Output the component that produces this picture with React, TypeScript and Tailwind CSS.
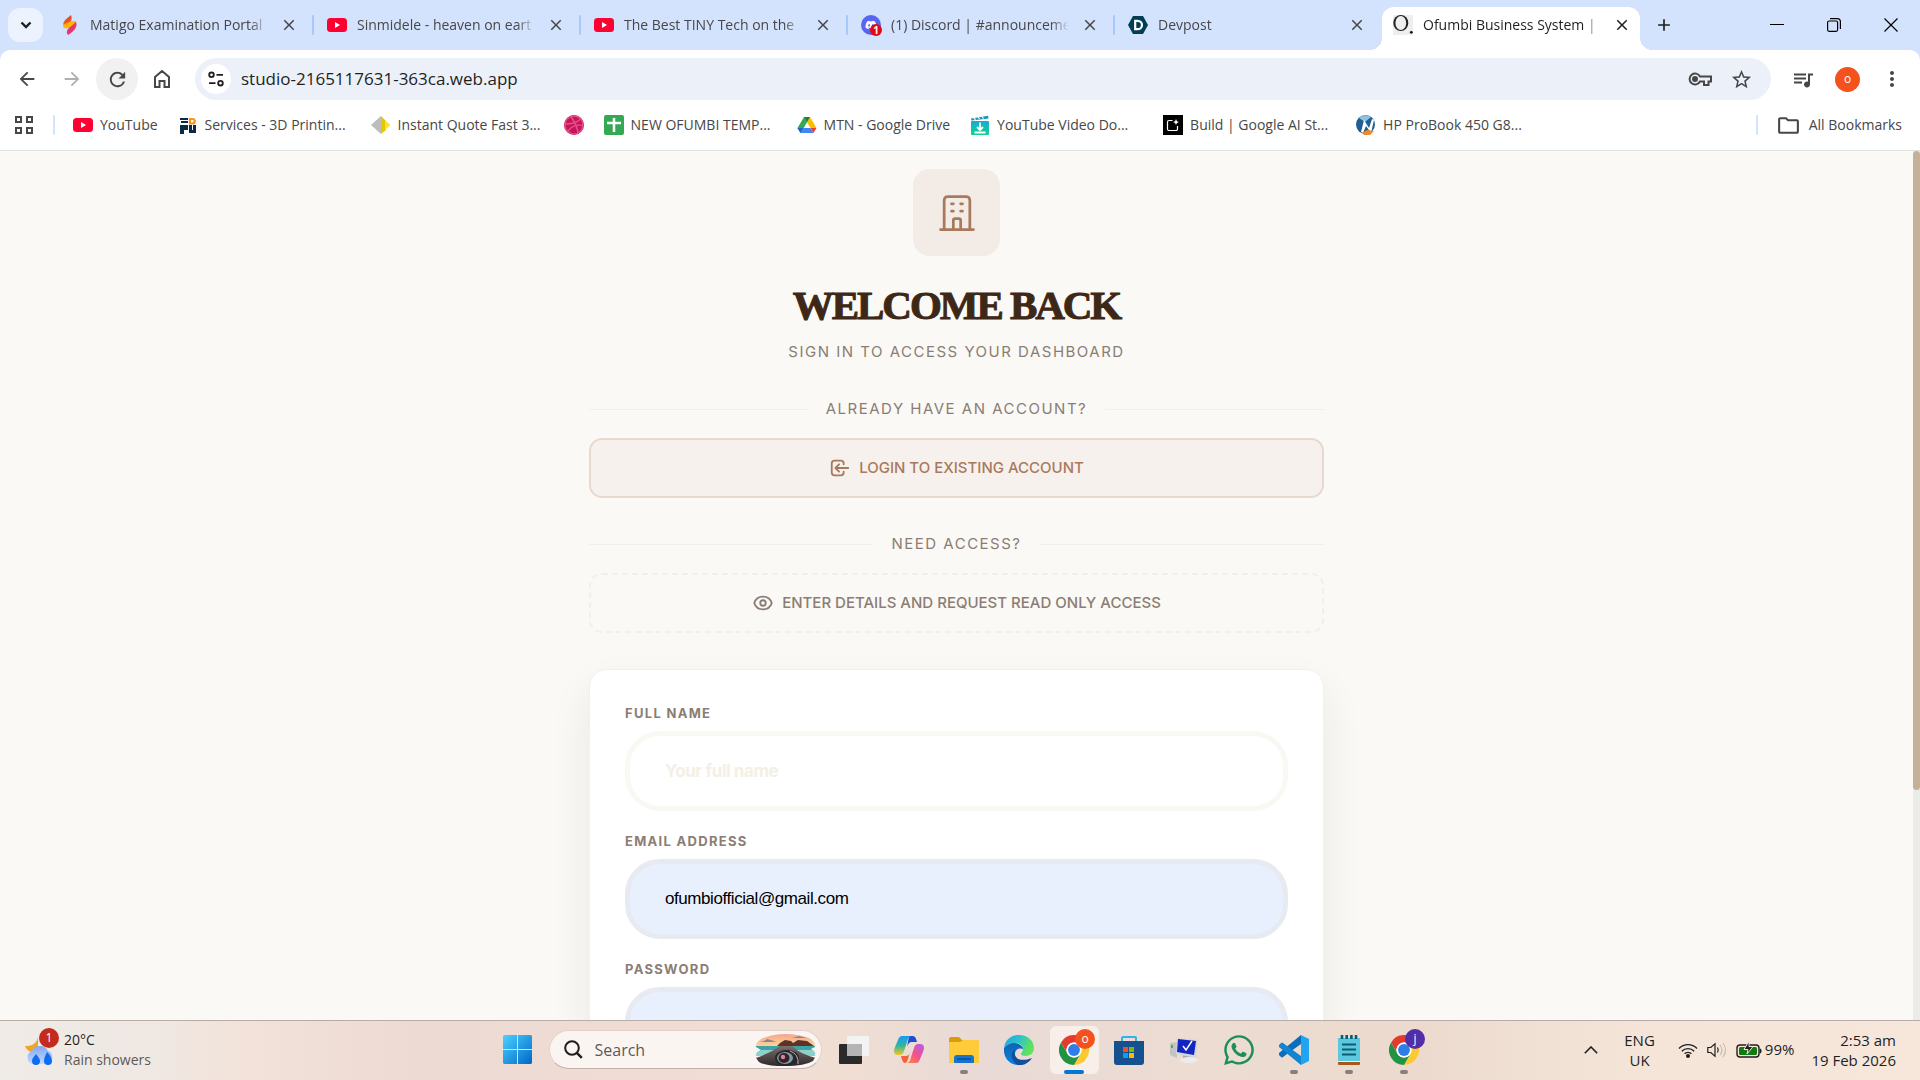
import type { ReactNode } from "react";
import {
  HiOutlineOfficeBuilding,
  HiOutlineLogin,
  HiOutlineEye,
} from "react-icons/hi";
import {
  MdArrowBack,
  MdArrowForward,
  MdRefresh,
  MdStarBorder,
  MdQueueMusic,
  MdMoreVert,
  MdOutlineFolder,
  MdClose,
  MdAdd,
} from "react-icons/md";
import { FaDribbble, FaWhatsapp, FaDiscord } from "react-icons/fa";

/* ---------- favicons ---------- */

function YouTubeIcon() {
  return (
    <svg viewBox="0 0 20 20" className="h-5 w-5 shrink-0">
      <rect x="0" y="3" width="20" height="14" rx="3.5" fill="#ff0033" />
      <path d="M8 7v6l5-3z" fill="#fff" />
    </svg>
  );
}

function MatigoIcon() {
  return (
    <svg viewBox="0 0 20 20" className="h-5 w-5 shrink-0">
      <defs>
        <linearGradient id="matigo" x1="0" y1="0" x2="0" y2="1">
          <stop offset="0" stopColor="#e8452a" />
          <stop offset="1" stopColor="#ff5a1f" />
        </linearGradient>
      </defs>
      <path d="M11 0c1 3 1 5-1 7l-6 4C2 7 5 5 11 0z" fill="url(#matigo)" />
      <path d="M3 12c0-3 4-4 7-5 2-1 3-1 6-1 1 4-3 6-6 7-3 0-5 1-7-1z" fill="#ffb400" />
      <path d="M16 7c2 5-2 9-8 13-2-3-1-5 1-7z" fill="#e8356d" />
    </svg>
  );
}

function DiscordIcon() {
  return (
    <span className="relative flex h-5 w-5 shrink-0 items-center justify-center rounded-full bg-[#5865f2]">
      <FaDiscord className="h-3 w-3 text-white" />
      <span className="absolute -right-px -bottom-px flex h-3 w-3 items-center justify-center rounded-full bg-[#e00b12] text-[10px] leading-none font-bold text-white">
        1
      </span>
    </span>
  );
}

function DevpostIcon() {
  return (
    <svg viewBox="0 0 20 20" className="h-5 w-5 shrink-0">
      <path d="M5 1h10l5 9-5 9H5l-5-9z" fill="#003e54" />
      <path
        d="M7.2 5.8h2.6a4.2 4.2 0 0 1 0 8.4H7.2z"
        fill="none"
        stroke="#fff"
        strokeWidth="2.2"
      />
    </svg>
  );
}

function OfumbiIcon() {
  return (
    <svg viewBox="0 0 20 20" className="h-5 w-5 shrink-0">
      <rect width="20" height="20" fill="#eeeeee" />
      <ellipse cx="7.800" cy="8" rx="7.500" ry="8" fill="#222" />
      <ellipse cx="7.800" cy="8" rx="5.400" ry="7" fill="#eeeeee" />
      <circle cx="18.300" cy="17.300" r="1.400" fill="#111" />
    </svg>
  );
}

function PrintIcon() {
  return (
    <svg viewBox="0 0 20 20" className="h-5 w-5 shrink-0">
      <path d="M2 3h8v2H2zM3 6h7v2H3z" fill="#0b2a45" />
      <path d="M12 4h2.500a2 2 0 0 1 0 4.500H12z" fill="none" stroke="#f7941d" strokeWidth="2.200" />
      <path d="M2 10h8v5H6v4H2zM11 10h3v5h1v-5h3v8h-7z" fill="#0b2a45" />
    </svg>
  );
}

function DiamondIcon() {
  return (
    <svg viewBox="0 0 20 20" className="h-5 w-5 shrink-0">
      <path d="M10 1v18L0 10z" fill="#bdbdbd" />
      <path d="M10 1l5 5v9l-5 4z" fill="#e6c800" />
      <path d="M14 5l5.500 5-5.500 5z" fill="#ffe03b" />
    </svg>
  );
}

function SheetPlusIcon() {
  return (
    <svg viewBox="0 0 20 20" className="h-5 w-5 shrink-0">
      <rect width="20" height="20" rx="2" fill="#34a853" />
      <path d="M10 3v14M3 8h14" stroke="#fff" strokeWidth="2.500" />
    </svg>
  );
}

function DriveIcon() {
  return (
    <svg viewBox="0 0 20 18" className="h-5 w-5 shrink-0">
      <path d="M7 1h6l-6.500 11.300L3.500 17 .5 12z" fill="#34a853" />
      <path d="M7 1h6l6.500 11h-6z" fill="#fbbc04" />
      <path d="M7 1h6l-3 5z" fill="#188038" />
      <path d="M6.500 12h7l3 5h-13z" fill="#4285f4" />
      <path d="M13.500 12h6l-3 5z" fill="#ea4335" />
      <path d="M.5 12h6l-3 5z" fill="#1967d2" />
    </svg>
  );
}

function VideoDownloadIcon() {
  return (
    <svg viewBox="0 0 20 20" className="h-5 w-5 shrink-0">
      <defs>
        <linearGradient id="vdl" x1="0" y1="0" x2="0" y2="1">
          <stop offset="0" stopColor="#18a9d6" />
          <stop offset="1" stopColor="#12d38b" />
        </linearGradient>
      </defs>
      <rect x="1" y="6" width="18" height="14" rx="1" fill="url(#vdl)" />
      <path d="M1 3.500L18 .8l.6 2.800L1.400 5.500z" fill="#1797b8" />
      <path d="M4 2.800l1.500 2M8 2l1.500 2M12 1.500l1.500 2" stroke="#fff" strokeWidth="1.200" />
      <path d="M10 7.500v7M7 12l3 3 3-3M4.500 17.500h11" fill="none" stroke="#fff" strokeWidth="1.800" />
    </svg>
  );
}

function BuildIcon() {
  return (
    <svg viewBox="0 0 20 20" className="h-5 w-5 shrink-0">
      <rect width="20" height="20" fill="#000" />
      <path
        d="M9.500 5.500H6A1.500 1.500 0 0 0 4.500 7v7A1.500 1.500 0 0 0 6 15.500h7a1.500 1.500 0 0 0 1.500-1.500v-3"
        fill="none"
        stroke="#fff"
        strokeWidth="1.200"
      />
      <path d="M13 4l.9 2.200L16 7l-2.100.9L13 10l-.9-2.100L10 7l2.100-.8z" fill="#fff" />
    </svg>
  );
}

function ProBookIcon() {
  return (
    <svg viewBox="0 0 20 20" className="h-5 w-5 shrink-0">
      <circle cx="9.500" cy="9.500" r="9.500" fill="#1f5e93" />
      <path d="M3 3a9 9 0 0 1 12-1L9 7z" fill="#8fc1e3" />
      <path d="M5 17L8 5l5 8 3-9 2 1-3 13-5-7-3 7z" fill="#fff" />
      <path d="M6 18l5-3 7 1-4 4H8z" fill="#f08a24" />
    </svg>
  );
}

/* ---------- browser chrome ---------- */

const tabs: { title: string; icon: ReactNode; active?: boolean }[] = [
  { title: "Matigo Examination Portal", icon: <MatigoIcon /> },
  { title: "Sinmidele - heaven on eart", icon: <YouTubeIcon /> },
  { title: "The Best TINY Tech on the", icon: <YouTubeIcon /> },
  { title: "(1) Discord | #announceme", icon: <DiscordIcon /> },
  { title: "Devpost", icon: <DevpostIcon /> },
  { title: "Ofumbi Business System |", icon: <OfumbiIcon />, active: true },
];

const bookmarks: { label: string; icon: ReactNode }[] = [
  { label: "YouTube", icon: <YouTubeIcon /> },
  { label: "Services - 3D Printin...", icon: <PrintIcon /> },
  { label: "Instant Quote Fast 3...", icon: <DiamondIcon /> },
  { label: "", icon: <FaDribbble className="h-5 w-5 rounded-full bg-[#c2185b] text-[#ea4c89]" /> },
  { label: "NEW OFUMBI TEMP...", icon: <SheetPlusIcon /> },
  { label: "MTN - Google Drive", icon: <DriveIcon /> },
  { label: "YouTube Video Do...", icon: <VideoDownloadIcon /> },
  { label: "Build | Google AI St...", icon: <BuildIcon /> },
  { label: "HP ProBook 450 G8...", icon: <ProBookIcon /> },
];

function TabStrip() {
  return (
    <div className="flex h-[50px] shrink-0 bg-[#d3e3fd] pl-2">
      <button
        aria-label="Search tabs"
        className="mt-2 flex h-[34px] w-[35px] shrink-0 items-center justify-center rounded-xl bg-[#ecf3fe] text-[#1f1f1f]"
      >
        <svg viewBox="0 0 12 8" className="h-2 w-3" fill="none" stroke="currentColor" strokeWidth="2.400">
          <path d="M1.500 1.500L6 6l4.500-4.500" />
        </svg>
      </button>
      <div className="ml-1 flex min-w-0 pt-[7px]">
        {tabs.map((tab, i) => (
          <div
            key={tab.title}
            className={
              tab.active
                ? "relative flex w-[258px] items-center rounded-t-xl bg-white pb-[7px] pl-[11px] text-[#1f1f1f]"
                : "flex w-[267px] items-center pb-[7px] pl-[13px] text-[#474747]"
            }
          >
            {tab.active && (
              <>
                <span className="absolute bottom-0 -left-3 h-3 w-3 bg-[radial-gradient(circle_at_0_0,transparent_12px,white_12px)]" />
                <span className="absolute -right-3 bottom-0 h-3 w-3 bg-[radial-gradient(circle_at_100%_0,transparent_12px,white_12px)]" />
              </>
            )}
            {tab.icon}
            <span className="ml-[10px] w-[178px] overflow-hidden mask-r-from-90% mask-r-to-100% text-sm whitespace-nowrap">
              {tab.title}
            </span>
            <button
              aria-label={`Close ${tab.title}`}
              className="ml-[11px] flex h-5 w-5 shrink-0 items-center justify-center"
            >
              <MdClose className="h-[18px] w-[18px]" />
            </button>
            {i < 4 && <span className="ml-auto h-5 w-[2px] rounded bg-[#a8c7fa]" />}
          </div>
        ))}
      </div>
      <button
        aria-label="New tab"
        className="ml-3 flex h-10 w-6 items-center justify-center self-center text-[#1f1f1f]"
      >
        <MdAdd className="h-5 w-5" />
      </button>
      <div className="mr-px ml-auto flex h-[50px] text-black">
        <button aria-label="Minimize" className="flex w-[57px] items-center justify-center">
          <svg viewBox="0 0 14 14" className="h-[14px] w-[14px]">
            <path d="M0 6.500h14" stroke="currentColor" />
          </svg>
        </button>
        <button aria-label="Restore" className="flex w-[57px] items-center justify-center">
          <svg viewBox="0 0 14 14" className="h-[14px] w-[14px]" fill="none" stroke="currentColor" strokeWidth="1.200">
            <rect x=".6" y="3" width="10" height="10.300" rx="1.500" />
            <path d="M3 .7h7.500A2.800 2.800 0 0 1 13.400 3.500V11" />
          </svg>
        </button>
        <button aria-label="Close window" className="flex w-[57px] items-center justify-center">
          <svg viewBox="0 0 14 14" className="h-[14px] w-[14px]">
            <path d="M.5.5l13 13M13.500.5l-13 13" stroke="currentColor" strokeWidth="1.200" />
          </svg>
        </button>
      </div>
    </div>
  );
}

function Toolbar() {
  return (
    <div className="shrink-0 bg-[#d3e3fd]">
      <div className="flex items-center rounded-t-[10px] bg-white pt-2 pr-3 pl-[6px] text-[#474747]">
        <button aria-label="Back" className="flex h-[42px] w-[42px] items-center justify-center">
          <MdArrowBack className="h-[22px] w-[22px]" />
        </button>
        <button aria-label="Forward" className="ml-[3px] flex h-[42px] w-[42px] items-center justify-center text-[#b0b0b0]">
          <MdArrowForward className="h-[22px] w-[22px]" />
        </button>
        <button aria-label="Reload" className="ml-[3px] flex h-[42px] w-[42px] items-center justify-center rounded-full bg-[#f1f1f1]">
          <MdRefresh className="h-[23px] w-[23px]" />
        </button>
        <button aria-label="Home" className="ml-[3px] flex h-[42px] w-[42px] items-center justify-center">
          <svg viewBox="0 0 16 18" className="h-[18px] w-4" fill="none" stroke="currentColor" strokeWidth="2">
            <path d="M1 7l7-6 7 6v10h-4.500v-6h-5v6H1z" />
          </svg>
        </button>
        <div className="ml-3 flex h-[42px] flex-1 items-center rounded-full bg-[#ecf0f9] pr-[18px] pl-[6px]">
          <button
            aria-label="View site information"
            className="flex h-[30px] w-[30px] items-center justify-center rounded-full bg-white text-[#1f1f1f]"
          >
            <svg viewBox="0 0 16 16" className="h-4 w-4" fill="none" stroke="currentColor" strokeWidth="1.800">
              <circle cx="3.500" cy="3.800" r="2.300" />
              <path d="M8.500 3.800H15M1 12.200h6.500" />
              <circle cx="12.500" cy="12.200" r="2.300" />
            </svg>
          </button>
          <input
            aria-label="Address"
            defaultValue="studio-2165117631-363ca.web.app"
            className="ml-[10px] min-w-0 flex-1 bg-transparent text-[17px] text-[#1f1f1f] outline-none"
          />
          <button aria-label="Passwords" className="flex w-6 justify-center">
            <svg viewBox="0 0 24 16" className="h-4 w-6" fill="none" stroke="currentColor" strokeWidth="2">
              <path d="M12 5.500A5.500 5.500 0 1 0 12 10.500h4V14h4.500v-3.500H23v-5z" />
              <circle cx="7" cy="8" r="2" fill="currentColor" />
            </svg>
          </button>
          <button aria-label="Bookmark this page" className="ml-[17px] flex w-6 justify-center">
            <MdStarBorder className="h-[23px] w-[23px]" />
          </button>
        </div>
        <button aria-label="Media controls" className="ml-5 flex w-6 justify-center">
          <MdQueueMusic className="h-[25px] w-[25px]" />
        </button>
        <button
          aria-label="Profile"
          className="ml-5 flex h-[25px] w-[25px] items-center justify-center rounded-full bg-[#f4511e] text-xs text-white"
        >
          o
        </button>
        <button aria-label="Menu" className="ml-[15px] flex h-[42px] w-[33px] items-center justify-center">
          <MdMoreVert className="h-6 w-6" />
        </button>
      </div>
    </div>
  );
}

function BookmarksBar() {
  return (
    <nav className="flex h-[51px] shrink-0 items-center border-b border-[#dde3df] bg-white pr-[18px] pl-[15px] text-sm whitespace-nowrap text-[#474747]">
      <svg viewBox="0 0 18 18" className="h-[18px] w-[18px]" fill="none" stroke="currentColor" strokeWidth="2">
        <path d="M1 1h5v5H1zM12 1h5v5h-5zM1 12h5v5H1zM12 12h5v5h-5z" />
      </svg>
      <span className="mr-[18px] ml-5 h-5 w-[2px] rounded bg-[#d3e3fd]" />
      <div className="flex items-center gap-5">
        {bookmarks.map((b, i) => (
          <a key={i} href="#bookmark" aria-label={b.label || "Dribbble"} className="flex items-center gap-[7px]">
            {b.icon}
            {b.label && <span className={b.label.endsWith("...") ? "w-[146px]" : ""}>{b.label}</span>}
          </a>
        ))}
      </div>
      <span className="ml-auto h-5 w-[2px] rounded bg-[#d3e3fd]" />
      <a href="#all" className="ml-[18px] flex items-center gap-2">
        <MdOutlineFolder className="h-[25px] w-[25px]" />
        All Bookmarks
      </a>
    </nav>
  );
}

/* ---------- sign-in page ---------- */

function Divider({ children }: { children: ReactNode }) {
  return (
    <div className="flex items-center gap-[18px]">
      <span className="h-px flex-1 bg-[#f3eee6]" />
      <span className="text-[15px] leading-6 tracking-widest text-[#8b7d74] uppercase">{children}</span>
      <span className="h-px flex-1 bg-[#f3eee6]" />
    </div>
  );
}

interface FieldProps {
  id: string;
  label: string;
  type: string;
  placeholder?: string;
  defaultValue?: string;
}

function Field({ id, label, type, placeholder, defaultValue }: FieldProps) {
  return (
    <div className="mb-5">
      <label
        htmlFor={id}
        className="mb-2 block text-[13px] leading-5 font-bold tracking-widest text-[#8b7d74] uppercase"
      >
        {label}
      </label>
      <input
        id={id}
        type={type}
        placeholder={placeholder}
        defaultValue={defaultValue}
        className={
          defaultValue
            ? "h-20 w-full rounded-[35px] border-[5px] border-[#e7eaf0] bg-[#e8f0fe] px-[35px] font-['Liberation_Sans',sans-serif] text-[17px] tracking-tight text-black outline-none"
            : "h-20 w-full rounded-[35px] border-[5px] border-[#f9f8f2] bg-white px-[35px] text-[17px] font-bold tracking-tight outline-none placeholder:text-[#f4efe5]"
        }
      />
    </div>
  );
}

function SignIn() {
  return (
    <main className="relative min-h-0 flex-1 overflow-hidden bg-[#faf9f5] pr-[7px] font-['Inter',sans-serif]">
      <div className="mx-auto flex max-w-[735px] flex-col pt-[18px]">
        <div className="mx-auto flex h-[87px] w-[87px] items-center justify-center rounded-[17px] bg-[#f3ebe6] text-[#a9795d]">
          <HiOutlineOfficeBuilding className="h-11 w-11 [&_path]:stroke-[1.5]" />
        </div>
        <h1 className="mt-6 text-center font-['Liberation_Serif',serif] text-[41px] leading-[50px] font-bold tracking-tighter text-[#3d2817] [-webkit-text-stroke:1px_#3d2817]">
          WELCOME BACK
        </h1>
        <p className="mt-[10px] text-center text-[15px] leading-6 tracking-widest text-[#8b7d74] uppercase">
          Sign in to access your dashboard
        </p>

        <div className="mt-[33px]">
          <Divider>Already have an account?</Divider>
          <button className="mt-[17px] flex h-[60px] w-full items-center justify-center gap-2 rounded-[13px] border-2 border-[#e8d9cf] bg-[#f7f1ed] text-[15px] font-medium text-[#a9795d]">
            <HiOutlineLogin className="h-[22px] w-[22px]" />
            LOGIN TO EXISTING ACCOUNT
          </button>
        </div>

        <div className="mt-[34px]">
          <Divider>Need access?</Divider>
          <button className="mt-[17px] flex h-[60px] w-full items-center justify-center gap-2 rounded-[13px] border-2 border-dashed border-[#f3f0e6] text-[15px] font-medium text-[#8b7d74]">
            <HiOutlineEye className="h-[22px] w-[22px]" />
            ENTER DETAILS AND REQUEST READ ONLY ACCESS
          </button>
        </div>

        <form className="mt-9 rounded-[18px] border border-[#f5f0e9] bg-white px-[35px] pt-[33px] pb-9 shadow-[0_20px_40px_rgba(61,40,23,0.08)]">
          <Field id="name" label="Full name" type="text" placeholder="Your full name" />
          <Field id="email" label="Email address" type="email" defaultValue="ofumbiofficial@gmail.com" />
          <Field id="password" label="Password" type="password" defaultValue="password" />
        </form>
      </div>
      <div className="absolute top-0 right-0 h-full w-[7px] bg-[#ebebe8]">
        <div className="h-[73.5%] rounded-full bg-[#c5b09a]" />
      </div>
    </main>
  );
}

/* ---------- taskbar ---------- */

function WeatherIcon() {
  return (
    <svg viewBox="0 0 32 32" className="h-8 w-8">
      <defs>
        <linearGradient id="cloud" x1="0" y1="0" x2="0" y2="1">
          <stop offset="0" stopColor="#7fa9f5" />
          <stop offset="1" stopColor="#c3d8fb" />
        </linearGradient>
      </defs>
      <path d="M14 0c1 6-4 13-13 12 2 6 9 8 13 4z" fill="#f0a528" />
      <path d="M8 30a7 7 0 0 1 0-13 9 9 0 0 1 16 0 7 7 0 0 1 0 13z" fill="url(#cloud)" />
      <path d="M12 20c3 4 4 5 4 7a4 4 0 0 1-8 0c0-3 2-4 4-7zM23 18c4 4 5 7 5 9a4 4 0 0 1-8 0c0-3 1-5 3-9z" fill="#0f6cf0" />
    </svg>
  );
}

function StartIcon() {
  return (
    <svg viewBox="0 0 29 29" className="h-[29px] w-[29px]">
      <defs>
        <linearGradient id="start" gradientUnits="userSpaceOnUse" x1="0" y1="0" x2="29" y2="29">
          <stop offset="0" stopColor="#4cd2ff" />
          <stop offset="1" stopColor="#0067c8" />
        </linearGradient>
      </defs>
      <path d="M1 0h13v14H0V1zM15 0h13l1 1v13H15zM0 15h14v14H1l-1-1zM15 15h14v13l-1 1H15z" fill="url(#start)" />
    </svg>
  );
}

function SearchPicture() {
  return (
    <svg viewBox="0 0 61 32" className="h-8 w-[61px]">
      <defs>
        <clipPath id="pic">
          <path d="M8 4Q30-4 54 4q7 4 6 9l-4 2 4 3q1 6-2 9-8 5-28 5T4 28Q-1 23 2 18l4-2-5-3Q0 8 8 4z" />
        </clipPath>
        <linearGradient id="sky" x1="0" y1="0" x2="0" y2="1">
          <stop offset="0" stopColor="#f5a78c" />
          <stop offset="1" stopColor="#fbd79c" />
        </linearGradient>
        <linearGradient id="road" x1="0" y1="0" x2="0" y2="1">
          <stop offset="0" stopColor="#7b706c" />
          <stop offset="1" stopColor="#2e272b" />
        </linearGradient>
      </defs>
      <g clipPath="url(#pic)">
        <rect width="61" height="13" fill="url(#sky)" />
        <path d="M5 8l4-1 3-2 4 1 5 2zM37 4l4-1 3-1 4 1 4 1z" fill="#94838f" />
        <path d="M22 12l3-3 5-3 6 1 2 2 5-3 9 1 7 5z" fill="#5e3227" />
        <rect y="12" width="61" height="5" fill="#3fa3a6" />
        <path d="M0 16h61v6H0z" fill="#8fd0cc" />
        <path d="M0 24Q14 20 25 12h12q8 8 24 12v8H0z" fill="url(#road)" />
        <ellipse cx="32" cy="24" rx="12" ry="8" fill="#2a252c" />
        <ellipse cx="30" cy="24" rx="8" ry="6" fill="#7ba0a0" />
        <ellipse cx="29" cy="24" rx="5.500" ry="5" fill="#3a1e2c" />
        <circle cx="28" cy="23" r="2.200" fill="#c98b97" />
        <path d="M35 17q9 3 8 13" fill="none" stroke="#b9b0ad" />
      </g>
    </svg>
  );
}

function TaskViewIcon() {
  return (
    <svg viewBox="0 0 30 30" className="h-[30px] w-[30px]">
      <rect x="0" y="9" width="23" height="20" rx="1" fill="#2a2a2a" />
      <rect x="8" y="1" width="22" height="20" rx="1" fill="#f3f3f3" />
      <path d="M8 9h15v12H8z" fill="#b4b4b4" />
    </svg>
  );
}

function CopilotIcon() {
  return (
    <svg viewBox="0 0 30 30" className="h-[30px] w-[30px]">
      <defs>
        <linearGradient id="cpa" x1="0" y1="0" x2="0" y2="1">
          <stop offset="0" stopColor="#1b9af0" />
          <stop offset=".5" stopColor="#2cb6a0" />
          <stop offset="1" stopColor="#f3c81e" />
        </linearGradient>
        <linearGradient id="cpb" x1="0" y1="1" x2="1" y2="0">
          <stop offset="0" stopColor="#ff8a3c" />
          <stop offset=".5" stopColor="#f0528c" />
          <stop offset="1" stopColor="#b45cf0" />
        </linearGradient>
      </defs>
      <path d="M15 1h4c2 0 3 2 4 6h-5c-3 0-4 2-5 5z" fill="#1c4fd0" />
      <path d="M8 1h10c-3 0-4 2-5 6l-3 9c-1 3-2 4-4 4H4c-4 0-5-3-3-8l3-7c1-3 2-4 4-4z" fill="url(#cpa)" />
      <path d="M22 28H12c3 0 4-2 5-6l3-9c1-3 2-4 4-4h2c4 0 5 3 3 8l-3 7c-1 3-2 4-4 4z" fill="url(#cpb)" />
      <path d="M7 21h5c2 0 3-1 4-4l-2 7c-1 3-2 4-3 4-2 0-3-3-4-7z" fill="#f4603c" />
    </svg>
  );
}

function FolderIcon() {
  return (
    <svg viewBox="0 0 30 30" className="h-[30px] w-[30px]">
      <path d="M0 4q0-2 2-2h8l3 3h15q2 0 2 2v4H0z" fill="#dc9a08" />
      <path d="M0 7h11l3-2h14q2 0 2 2v21H0z" fill="#ffcb3a" />
      <path d="M5 28v-5q0-3 3-3h14q3 0 3 3v5z" fill="#1474cf" />
      <path d="M8 24h14" stroke="#0a4d94" strokeWidth="1.500" />
    </svg>
  );
}

function EdgeIcon() {
  return (
    <svg viewBox="0 0 30 30" className="h-[30px] w-[30px]">
      <defs>
        <linearGradient id="ega" x1="0" y1="0" x2="1" y2=".4">
          <stop offset="0" stopColor="#1ba4e8" />
          <stop offset=".5" stopColor="#2cc3c9" />
          <stop offset="1" stopColor="#62e35a" />
        </linearGradient>
        <linearGradient id="egb" x1="0" y1="0" x2="0" y2="1">
          <stop offset="0" stopColor="#0f63b4" />
          <stop offset="1" stopColor="#0a83dd" />
        </linearGradient>
      </defs>
      <path d="M0 13C1 5 7 0 15 0c9 0 15 6 15 13 0 5-4 8-8 8-3 0-5-1-5-2s2-2 2-5c0-4-4-6-8-6-5 0-9 2-11 5z" fill="url(#ega)" />
      <path d="M0 13c2-3 6-5 10-5 5 0 9 3 9 6-2-1-8-1-8 5 0 6 6 9 11 8-3 2-5 3-8 3C6 30-1 23 0 13z" fill="url(#egb)" />
      <path d="M11 14c-3 8 4 14 17 9-3 5-9 8-14 7-6-2-9-11-3-16z" fill="#124f9e" />
    </svg>
  );
}

function ChromeIcon({ badge, badgeClass }: { badge: string; badgeClass: string }) {
  return (
    <span className="relative block h-[30px] w-[30px]">
      <svg viewBox="0 0 48 48" className="h-[30px] w-[30px]">
        <circle cx="24" cy="24" r="24" fill="#fff" />
        <path d="M3.200 12A24 24 0 0 1 44.800 12H24a12 12 0 0 0-10.400 18z" fill="#e33b2e" />
        <path d="M44.800 12A24 24 0 0 1 24 48l10.400-18A12 12 0 0 0 24 12z" fill="#fcc934" />
        <path d="M24 48A24 24 0 0 1 3.200 12l10.400 18A12 12 0 0 0 34.400 30z" fill="#229342" />
        <circle cx="24" cy="24" r="12" fill="#fff" />
        <circle cx="24" cy="24" r="9.500" fill="#2f7de9" />
      </svg>
      <span
        className={`absolute -top-[6px] -right-[6px] flex h-5 w-5 items-center justify-center rounded-full text-xs leading-none text-white ${badgeClass}`}
      >
        {badge}
      </span>
    </span>
  );
}

function StoreIcon() {
  return (
    <svg viewBox="0 0 30 30" className="h-[30px] w-[30px]">
      <path d="M8 6V3q0-1 1-1h12q1 0 1 1v3" fill="none" stroke="#28b6ee" strokeWidth="2" />
      <path d="M0 6h30v21q0 3-3 3H3q-3 0-3-3z" fill="#17508f" />
      <path d="M9 12h5v5H9z" fill="#f25022" />
      <path d="M15 12h5v5h-5z" fill="#7fba00" />
      <path d="M9 18h5v5H9z" fill="#00a4ef" />
      <path d="M15 18h5v5h-5z" fill="#ffb900" />
    </svg>
  );
}

function ComputerIcon() {
  return (
    <svg viewBox="0 0 30 30" className="h-[30px] w-[30px]">
      <path d="M1 8l7-1v16l-7-3z" fill="#c4c4c4" />
      <path d="M2 10h2v3H2z" fill="#3ab54a" />
      <path d="M14 20l9 1v4h-9z" fill="#a9a9a9" />
      <path d="M8 3l21 2-2 18-20-4z" fill="#d6d6d6" />
      <path d="M9 4l18 2-2 14-17-3z" fill="#1226c4" />
      <path d="M14 11l3 4 6-9" fill="none" stroke="#fff" strokeWidth="1.500" />
      <ellipse cx="20" cy="25" rx="9" ry="3" fill="#ececec" />
    </svg>
  );
}

function VsCodeIcon() {
  return (
    <svg viewBox="0 0 30 30" className="h-[30px] w-[30px]">
      <path d="M22 0v9L4 22q-1 1-2 0l-2-2q-1-1 0-2z" fill="#0a6ebd" />
      <path d="M22 30v-9L4 8Q3 7 2 8l-2 2q-1 1 0 2z" fill="#1484d0" />
      <path d="M22 0l8 4v22l-8 4z" fill="#23a4f0" />
    </svg>
  );
}

function NotepadIcon() {
  return (
    <svg viewBox="0 0 24 30" className="h-[30px] w-6">
      <path d="M1 26h22v3q0 1-1 1H2q-1 0-1-1z" fill="#a5571c" />
      <path d="M1 3h22v24H1z" fill="#5cc8dd" />
      <path d="M1 26.500h22" stroke="#f4f4f4" />
      <path d="M5 9.500h14M5 14.500h14M5 19.500h14" stroke="#0b5c70" strokeWidth="1.800" />
      <path d="M5 0v4M9.700 0v4M14.400 0v4M19 0v4" stroke="#0b5c70" strokeWidth="2.600" />
    </svg>
  );
}

const apps: { name: string; icon: ReactNode; running?: boolean; active?: boolean }[] = [
  { name: "Task view", icon: <TaskViewIcon /> },
  { name: "Copilot", icon: <CopilotIcon /> },
  { name: "File Explorer", icon: <FolderIcon />, running: true },
  { name: "Edge", icon: <EdgeIcon /> },
  { name: "Chrome", icon: <ChromeIcon badge="o" badgeClass="bg-[#f4511e]" />, active: true },
  { name: "Store", icon: <StoreIcon /> },
  { name: "Computer", icon: <ComputerIcon /> },
  { name: "WhatsApp", icon: <FaWhatsapp className="h-[34px] w-[34px] text-[#1c8f55]" /> },
  { name: "VS Code", icon: <VsCodeIcon />, running: true },
  { name: "Notepad", icon: <NotepadIcon />, running: true },
  { name: "Chrome profile j", icon: <ChromeIcon badge="j" badgeClass="bg-[#512da8]" />, running: true },
];

function Taskbar() {
  return (
    <footer className="grid h-[60px] shrink-0 grid-cols-[1fr_auto_1fr] items-center border-t border-[#b8aca6] bg-[linear-gradient(90deg,#efebe7_0%,#efe8e3_8%,#f3e2d9_13%,#ecdad3_22%,#f1dcd5_34%,#f0ded3_44%,#e9dad7_51%,#ecdcd2_62%,#ecdace_74%,#f5e5d9_86%,#f7e7da_100%)] pb-[2px] text-sm text-[#1f1f1f]">
      <button className="relative flex items-center gap-2 justify-self-start pl-6 text-left leading-5">
        <WeatherIcon />
        <span className="absolute -top-[2px] left-[39px] flex h-5 w-5 items-center justify-center rounded-full bg-[#c42b1c] text-xs text-white">
          1
        </span>
        <span>
          <span className="block">20°C</span>
          <span className="block text-[#5c5a58]">Rain showers</span>
        </span>
      </button>

      <div className="flex items-center pl-[14px]">
        <button aria-label="Start" className="mr-[17px]">
          <StartIcon />
        </button>
        <label className="mr-[5px] flex h-[39px] w-[273px] items-center rounded-full border border-[#e2d2cb] border-b-[#bfb1ab] bg-[#fbf5f2] pr-[5px] pl-[14px]">
          <svg viewBox="0 0 19 19" className="h-[19px] w-[19px] shrink-0" fill="none" stroke="#1f1f1f" strokeWidth="2">
            <circle cx="8" cy="8" r="6.800" />
            <path d="M12.800 12.800l5 5" strokeWidth="2.500" />
          </svg>
          <input
            aria-label="Search"
            placeholder="Search"
            className="ml-3 min-w-0 flex-1 bg-transparent text-base outline-none placeholder:text-[#5c5a58]"
          />
          <SearchPicture />
        </label>
        {apps.map((app) => (
          <button
            key={app.name}
            aria-label={app.name}
            className={
              app.active
                ? "relative mx-[3px] flex h-12 w-[49px] items-center justify-center rounded-md bg-[#f8efeb]"
                : "relative mx-[3px] flex h-12 w-[49px] items-center justify-center"
            }
          >
            {app.icon}
            {app.running && <span className="absolute bottom-0 h-1 w-2 rounded-full bg-[#85807d]" />}
            {app.active && <span className="absolute bottom-0 h-1 w-5 rounded-full bg-[#0078d4]" />}
          </button>
        ))}
      </div>

      <div className="flex items-center justify-self-end pr-6 text-[15px]">
        <svg viewBox="0 0 14 8" className="h-2 w-[14px]" fill="none" stroke="#1f1f1f" strokeWidth="1.600">
          <path d="M.8 7.200L7 1l6.200 6.200" />
        </svg>
        <span className="ml-[26px] text-center leading-5">
          ENG
          <br />
          UK
        </span>
        <svg viewBox="0 0 20 16" className="ml-[23px] h-4 w-5" fill="none" stroke="#1f1f1f" strokeWidth="1.400">
          <path d="M1 6.500a12.500 12.500 0 0 1 18 0M3.800 9.200a8.700 8.700 0 0 1 12.400 0M6.600 11.800a4.900 4.900 0 0 1 6.800 0" />
          <circle cx="10" cy="14" r="1.300" fill="#1f1f1f" />
        </svg>
        <svg viewBox="0 0 20 16" className="ml-[9px] h-4 w-5" fill="none" stroke="#1f1f1f" strokeWidth="1.200">
          <path d="M.8 5.500h3L8 1.800v12.400L3.800 10.500h-3z" />
          <path d="M10.500 5.500q1.500 2.500 0 5" />
          <path d="M13 3q4 5 0 10M16 1q5 7 0 14" stroke="#c9bcb3" />
        </svg>
        <svg viewBox="0 0 26 18" className="ml-[9px] h-[18px] w-[26px]">
          <rect x="1" y="4" width="22" height="12" rx="3" fill="none" stroke="#1f1f1f" strokeWidth="1.400" />
          <rect x="3" y="6" width="18" height="8" rx="1.500" fill="#107c10" />
          <path d="M24 8q1.500 2 0 4" fill="none" stroke="#1f1f1f" strokeWidth="1.600" />
          <path d="M13 0L8 8.500h4L11 13l6-7.500h-4z" fill="#1f1f1f" stroke="#f6e6da" />
        </svg>
        <span className="ml-[3px]">99%</span>
        <span className="ml-[17px] text-right leading-5">
          2:53 am
          <br />
          19 Feb 2026
        </span>
      </div>
    </footer>
  );
}

export default function App() {
  return (
    <div className="flex h-screen flex-col overflow-hidden font-['Open_Sans',sans-serif]">
      <TabStrip />
      <Toolbar />
      <BookmarksBar />
      <SignIn />
      <Taskbar />
    </div>
  );
}
